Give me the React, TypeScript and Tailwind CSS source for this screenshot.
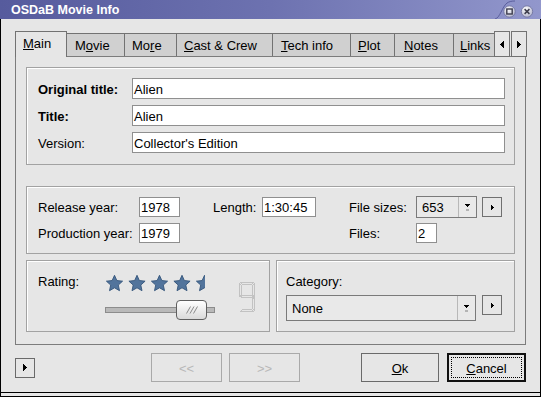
import React from "react";

const RightTri = ({ big = false }: { big?: boolean }) =>
  big ? (
    <svg width="4" height="7" viewBox="0 0 4 7" shapeRendering="crispEdges">
      <rect x="0" y="0" width="1" height="7" fill="#000" />
      <rect x="1" y="1" width="1" height="5" fill="#000" />
      <rect x="2" y="2" width="1" height="3" fill="#000" />
      <rect x="3" y="3" width="1" height="1" fill="#000" />
    </svg>
  ) : (
    <svg width="3" height="5" viewBox="0 0 3 5" shapeRendering="crispEdges">
      <rect x="0" y="0" width="1" height="5" fill="#000" />
      <rect x="1" y="1" width="1" height="3" fill="#000" />
      <rect x="2" y="2" width="1" height="1" fill="#000" />
    </svg>
  );

const LeftTri = () => (
  <svg width="4" height="7" viewBox="0 0 4 7" shapeRendering="crispEdges">
    <rect x="3" y="0" width="1" height="7" fill="#000" />
    <rect x="2" y="1" width="1" height="5" fill="#000" />
    <rect x="1" y="2" width="1" height="3" fill="#000" />
    <rect x="0" y="3" width="1" height="1" fill="#000" />
  </svg>
);

const DownArrow = () => (
  <svg width="5" height="7" viewBox="0 0 5 7" shapeRendering="crispEdges">
    <rect x="0" y="0" width="5" height="1" fill="#000" />
    <rect x="1" y="1" width="3" height="1" fill="#000" />
    <rect x="2" y="2" width="1" height="1" fill="#000" />
    <rect x="1" y="5" width="3" height="2" fill="#b4b4b4" />
  </svg>
);

const ArrowButton = () => (
  <div className="w-[20px] h-[20px] border border-[#707070] bg-[#e6e6e6] flex items-center justify-center shrink-0">
    <RightTri />
  </div>
);

const Input = ({ value, className = "" }: { value: string; className?: string }) => (
  <div className={`border border-[#8f8f8f] bg-white pl-[1px] flex items-center whitespace-nowrap overflow-hidden ${className}`}>
    {value}
  </div>
);

const Combo = ({ value, className = "" }: { value: string; className?: string }) => (
  <div className={`border border-[#7a7a7a] bg-[#e9e9e9] flex shrink-0 ${className}`}>
    <div className="flex-1 pl-[5px] flex items-center">{value}</div>
    <div className="w-[18px] border-l border-[#b8b8b8] flex items-center justify-center">
      <DownArrow />
    </div>
  </div>
);

const starPts =
  "8.5,0.3 10.85,5.56 16.58,6.17 12.3,10.04 13.5,15.68 8.5,12.8 3.5,15.68 4.7,10.04 0.42,6.17 6.15,5.56";

const Stars = () => (
  <svg width="108" height="17" viewBox="0 0 108 17">
    <defs>
      <clipPath id="half">
        <rect x="90" y="0" width="9" height="17" />
      </clipPath>
    </defs>
    {[0, 22.5, 45, 67.5].map((x) => (
      <polygon key={x} points={starPts} transform={`translate(${x} 0)`} fill="#52749c" stroke="#34557b" strokeWidth="0.9" strokeLinejoin="round" />
    ))}
    <g clipPath="url(#half)">
      <polygon points={starPts} transform="translate(90 0)" fill="#52749c" stroke="#34557b" strokeWidth="0.9" strokeLinejoin="round" />
    </g>
  </svg>
);

const Lcd = () => (
  <svg width="16" height="30" viewBox="0 0 16 30" fill="none" shapeRendering="crispEdges">
    <g stroke="#c2c2c2" strokeWidth="1">
      <path d="M1.5 0.5 H14.5 L12.5 2.5 H3.5 Z" />
      <path d="M0.5 1.5 L2.5 3.5 V12.5 L0.5 14.5 Z" />
      <path d="M15.5 1.5 V14.5 L13.5 12.5 V3.5 Z" />
      <path d="M1.5 14.5 L3.5 13.5 H12.5 L14.5 14.5 L12.5 15.5 H3.5 Z" />
      <path d="M15.5 15.5 V28.5 L13.5 26.5 V16.5 Z" />
      <path d="M1.5 29.5 L3.5 27.5 H12.5 L14.5 29.5 Z" />
    </g>
  </svg>
);

const Slider = () => (
  <div className="relative w-[110px] h-[20px] flex items-center">
    <div className="w-full h-[6px] border border-[#8c8c8c] bg-[#b9b9b9]" />
    <div className="absolute left-[71px] top-0 w-[31px] h-[20px] rounded-[4px] border border-[#5f5f5f] bg-gradient-to-b from-[#ffffff] to-[#dadada] flex items-center justify-center">
      <svg width="12" height="8" viewBox="0 0 12 8">
        <g stroke="#8a8a8a" strokeWidth="1">
          <line x1="0.5" y1="7.5" x2="4.5" y2="0.5" />
          <line x1="4" y1="7.5" x2="8" y2="0.5" />
          <line x1="7.5" y1="7.5" x2="11.5" y2="0.5" />
        </g>
      </svg>
    </div>
  </div>
);

const tabs: { label: React.ReactNode; w: string; pl: string }[] = [
  { label: <>M<u>o</u>vie</>, w: "w-[58px]", pl: "pl-[8px]" },
  { label: <>Mo<u>r</u>e</>, w: "w-[52px]", pl: "pl-[7px]" },
  { label: <><u>C</u>ast &amp; Crew</>, w: "w-[96px]", pl: "pl-[7px]" },
  { label: <><u>T</u>ech info</>, w: "w-[78px]", pl: "pl-[8px]" },
  { label: <><u>P</u>lot</>, w: "w-[44px]", pl: "pl-[7px]" },
  { label: <><u>N</u>otes</>, w: "w-[59px]", pl: "pl-[9px]" },
];

const groupCls = "border border-[#a2a2a2] shadow-[inset_1px_1px_0_#ffffff]";

export default function App() {
  return (
    <div className="w-[541px] h-[397px] bg-[#e6e6e6] flex flex-col overflow-hidden font-['Liberation_Sans',Arial,sans-serif] text-[13px] leading-[15px] text-black">
      {/* Title bar */}
      <div className="h-[19px] shrink-0 flex items-center justify-between bg-gradient-to-r from-[#565b9d] via-[#6d72b0] to-[#9297cc] pl-[11px] pr-[4px]">
        <span className="text-white font-bold text-[12.5px] leading-[14px] pt-[1px]">OSDaB Movie Info</span>
        <svg width="44" height="19" viewBox="0 0 44 19">
          <defs>
            <radialGradient id="btn" cx="0.4" cy="0.3" r="0.8">
              <stop offset="0" stopColor="#ffffff" />
              <stop offset="1" stopColor="#a9abc6" />
            </radialGradient>
          </defs>
          <path d="M2 19 C 7 18, 9 7, 14 3 C 16 1.5, 19 1, 22 1" stroke="#44498a" strokeWidth="1" fill="none" opacity="0.7" />
          <circle cx="16.5" cy="11.5" r="5.7" fill="url(#btn)" stroke="#6b6e9a" strokeWidth="0.8" />
          <rect x="13.8" y="9" width="5.4" height="5" fill="none" stroke="#3d3d4d" strokeWidth="1.4" />
          <circle cx="34" cy="11.5" r="5.7" fill="url(#btn)" stroke="#6b6e9a" strokeWidth="0.8" />
          <path d="M31.6 9.1 L36.4 13.9 M36.4 9.1 L31.6 13.9" stroke="#3d3d4d" strokeWidth="1.5" />
        </svg>
      </div>

      {/* Window body */}
      <div className="flex-1 border-l border-r border-b border-black flex flex-col">
        <div className="h-[374px] shrink-0 border-b border-black flex flex-col pl-[14px] pt-[12px]">
          {/* Tab bar */}
          <div className="h-[25px] flex items-end">
            <div className="relative z-10 w-[52px] h-[26px] -mb-px border-l border-t border-r border-[#727272] bg-[#e6e6e6] flex items-center pl-[7px] pb-[2px]">
              <span><u>M</u>ain</span>
            </div>
            {tabs.map((t, i) => (
              <div key={i} className={`${t.w} ${t.pl} h-[23px] border-t border-r border-[#727272] bg-[#d0d0d0] flex items-center pt-[1px]`}>
                <span className="whitespace-nowrap">{t.label}</span>
              </div>
            ))}
            <div className="w-[40px] h-[23px] border-t border-[#727272] bg-[#d0d0d0] flex items-center pl-[6px] pt-[1px] overflow-hidden">
              <span className="whitespace-nowrap"><u>L</u>inks</span>
            </div>
            <div className="relative z-10 w-[16px] h-[26px] -mb-px border border-[#727272] bg-[#e6e6e6] flex items-center justify-center">
              <LeftTri />
            </div>
            <div className="relative z-10 ml-[1px] w-[16px] h-[26px] -mb-px border border-[#727272] bg-[#e6e6e6] flex items-center justify-center">
              <RightTri big />
            </div>
          </div>

          {/* Panel */}
          <div className="w-[511px] h-[289px] border border-[#7c7c7c] p-[10px] flex flex-col">
            {/* Titles group */}
            <div className={`h-[98px] ${groupCls} pl-[11px] pr-[9px] pt-[10px] flex flex-col gap-[6px]`}>
              <div className="h-[21px] flex items-center">
                <span className="w-[94px] font-bold pt-[1px]">Original title:</span>
                <Input value="Alien" className="flex-1 h-[21px] pt-[1px]" />
              </div>
              <div className="h-[21px] flex items-center">
                <span className="w-[94px] font-bold pt-[1px]">Title:</span>
                <Input value="Alien" className="flex-1 h-[21px] pt-[1px]" />
              </div>
              <div className="h-[21px] flex items-center">
                <span className="w-[94px] pt-[1px]">Version:</span>
                <Input value="Collector's Edition" className="flex-1 h-[21px] pt-[1px]" />
              </div>
            </div>

            {/* Dates group */}
            <div className={`mt-[21px] h-[68px] ${groupCls} pl-[11px] pt-[9px] flex flex-col gap-[4px]`}>
              <div className="h-[22px] flex items-center">
                <span className="w-[101px] shrink-0">Release year:</span>
                <Input value="1978" className="w-[41px] h-[20px] shrink-0" />
                <span className="w-[33px] shrink-0" />
                <span className="w-[49px] shrink-0">Length:</span>
                <Input value="1:30:45" className="w-[54px] h-[20px] shrink-0" />
                <span className="w-[33px] shrink-0" />
                <span className="w-[67px] shrink-0">File sizes:</span>
                <Combo value="653" className="w-[61px] h-[22px]" />
                <span className="w-[5px] shrink-0" />
                <ArrowButton />
              </div>
              <div className="h-[22px] flex items-center">
                <span className="w-[101px] shrink-0">Production year:</span>
                <Input value="1979" className="w-[41px] h-[20px] shrink-0" />
                <span className="w-[169px] shrink-0" />
                <span className="w-[67px] shrink-0">Files:</span>
                <Input value="2" className="w-[21px] h-[20px] shrink-0" />
              </div>
            </div>

            {/* Rating / Category */}
            <div className="mt-[6px] h-[72px] flex">
              <div className={`w-[244px] ${groupCls} pl-[11px] pt-[13px] flex items-start`}>
                <span className="w-[67px] shrink-0">Rating:</span>
                <div className="w-[110px] shrink-0 flex flex-col">
                  <div className="ml-[1px] mt-[1px] h-[17px]">
                    <Stars />
                  </div>
                  <div className="mt-[8px]">
                    <Slider />
                  </div>
                </div>
                <div className="ml-[24px] mt-[8px]">
                  <Lcd />
                </div>
              </div>
              <div className={`ml-[6px] flex-1 ${groupCls} pl-[9px] pt-[13px] flex flex-col`}>
                <span>Category:</span>
                <div className="mt-[6px] flex items-start">
                  <Combo value="None" className="w-[190px] h-[26px]" />
                  <span className="w-[6px] shrink-0" />
                  <ArrowButton />
                </div>
              </div>
            </div>
          </div>

          {/* Bottom buttons */}
          <div className="mt-[8px] h-[29px] flex items-center">
            <div className="w-[20px] h-[20px] border border-[#6a6a6a] flex items-center justify-center">
              <RightTri big />
            </div>
            <div className="ml-[116px] w-[71px] h-[29px] border border-[#a9a9a9] text-[#b8b8b8] flex items-center justify-center pt-[1px]">
              &lt;&lt;
            </div>
            <div className="ml-[7px] w-[71px] h-[29px] border border-[#a9a9a9] text-[#b8b8b8] flex items-center justify-center pt-[1px]">
              &gt;&gt;
            </div>
            <div className="ml-[61px] w-[78px] h-[29px] border border-[#6a6a6a] flex items-center justify-center pt-[1px]">
              <span><u>O</u>k</span>
            </div>
            <div className="ml-[8px] w-[79px] h-[29px] border-2 border-[#111111] p-[2px] flex">
              <div className="flex-1 border border-dotted border-black flex items-center justify-center pt-[1px]">
                <span><u>C</u>ancel</span>
              </div>
            </div>
          </div>
        </div>
      </div>
    </div>
  );
}
